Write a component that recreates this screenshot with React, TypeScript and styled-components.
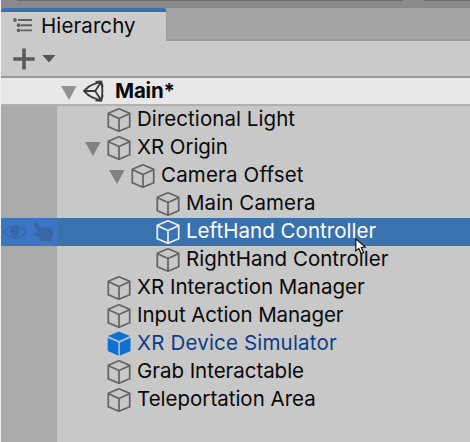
import React from 'react';
import styled, { createGlobalStyle } from 'styled-components';

const Global = createGlobalStyle`
  * { box-sizing: border-box; }
  body { margin: 0; background: #c8c8c8; overflow: hidden; }
`;

const Window = styled.main`
  position: relative;
  width: 470px;
  height: 442px;
  border-left: 1px solid #f2f2f2;
  background: #c8c8c8;
  font-family: Inter, sans-serif;
  color: #090909;
  overflow: hidden;
  display: flex;
  flex-direction: column;
`;

const TopEdge = styled.div`
  height: 8px;
  flex: none;
  background: #8a8a8a;
  padding-left: 16px;
  display: flex;
  gap: 21px;
`;

const EdgeLine = styled.span<{ $width: number }>`
  width: ${p => p.$width}px;
  height: 1px;
  flex: none;
  background: #6b6b6b;
`;

const TabBar = styled.div`
  display: flex;
  flex: none;
  height: 33px;
  background: #a5a5a5;
`;

const Tab = styled.div`
  width: 165px;
  border-top: 4px solid #3a72b0;
  border-radius: 2px 2px 0 0;
  background: #cbcbcb;
  display: flex;
  align-items: flex-start;
  padding-left: 12px;
`;

const TabSpace = styled.div`
  flex: 1;
  border-left: 1px solid #999;
  border-bottom: 2px solid #999;
`;

const Toolbar = styled.div`
  height: 37px;
  flex: none;
  background: #cbcbcb;
  border-bottom: 2px solid #999;
  display: flex;
  align-items: center;
  gap: 7px;
  padding-left: 12px;
`;

const Label = styled.span<{ $spacing?: number; $bold?: boolean; $tone?: string }>`
  font-size: 20.5px;
  font-weight: ${p => (p.$bold ? 700 : 400)};
  color: ${p => p.$tone ?? '#090909'};
  line-height: 26px;
  white-space: nowrap;
  letter-spacing: ${p => p.$spacing ?? 0}px;
`;

const TabLabel = styled(Label)`
  line-height: 28px;
`;

const SceneRow = styled.div`
  height: 28px;
  flex: none;
  background: #e8e8e8;
  border-bottom: 2px solid #b0b0b0;
  padding-left: 60px;
  display: flex;
  align-items: flex-start;
`;

const Tree = styled.div`
  flex: 1;
`;

const Row = styled.div<{ $selected?: boolean }>`
  display: flex;
  height: 28px;
  background: ${p => (p.$selected ? '#3a72b0' : 'transparent')};
`;

const Gutter = styled.div<{ $selected?: boolean }>`
  width: 56px;
  flex: none;
  background: ${p => (p.$selected ? '#3e75c3' : '#aaaaaa')};
`;

const Entry = styled.div<{ $indent: number }>`
  display: flex;
  align-items: flex-start;
  padding-left: ${p => p.$indent}px;
`;

const ArrowSlot = styled.span`
  width: 22px;
  height: 28px;
  flex: none;
  display: flex;
  align-items: center;
`;

const SceneArrowSlot = styled(ArrowSlot)`
  width: 21px;
`;

const CubeSlot = styled.span`
  width: 30px;
  height: 28px;
  flex: none;
`;

const SceneIconSlot = styled.span`
  width: 33px;
  height: 26px;
  flex: none;
`;

const ListSlot = styled.span`
  width: 28px;
  height: 28px;
  flex: none;
`;

const Pointer = styled.svg`
  position: absolute;
  left: 352px;
  top: 236px;
`;

const Arrow = ({ scene = false }: { scene?: boolean }) => (
  <svg width="16" height="16" viewBox="0 0 16 16">
    <path d="M0 2H15.5L8 16Z" fill={scene ? '#929292' : '#808080'} />
  </svg>
);

type CubeKind = 'plain' | 'selected' | 'prefab';

const Cube = ({ kind }: { kind: CubeKind }) => {
  if (kind === 'prefab') {
    return (
      <svg width="25" height="28" viewBox="0 0 25 28">
        <path d="M12 1.6L23 6L12 11L1 6Z M0.7 7.7L11.4 12.5V25.7L0.7 21Z M23.5 7.7L12.8 12.5V25.7L23.5 21Z" fill="#1170d4" />
      </svg>
    );
  }
  return (
    <svg width="25" height="28" viewBox="0 0 25 28">
      <path
        d="M12 2.8L22.7 7.2V20.7L12 25.2L1.3 20.7V7.2Z M1.6 7.7L12 12.6L22.4 7.7 M12 12.6V25"
        fill="none"
        stroke={kind === 'selected' ? '#f0f0f0' : '#626262'}
        strokeWidth="1.7"
        strokeLinejoin="round"
      />
    </svg>
  );
};

const SceneIcon = () => (
  <svg width="24" height="26" viewBox="0 0 24 26">
    <path
      d="M7.2 8.3L2 13L7.2 17.9 M5.6 9.6Q9.5 6.3 19.2 3.8 M5.6 16.4Q9.5 19.9 19.2 22.4 M19.2 3.8Q21.6 13 19.2 22.4 M2 13H13.2L19 4.2 M13.2 13L19 22 M13.5 4L19.2 3.5L20.8 9 M13.5 22.2L19.2 22.7L20.8 17"
      fill="none"
      stroke="#3b3b3b"
      strokeWidth="1.9"
      strokeLinejoin="round"
    />
  </svg>
);

const ListIcon = () => (
  <svg width="20" height="28" viewBox="0 0 20 28">
    <g fill="#606060">
      <circle cx="2" cy="8" r="1.9" />
      <circle cx="5.7" cy="13.2" r="1.9" />
      <circle cx="5.7" cy="18.3" r="1.9" />
      <path d="M5 7.1H19V9H5Z M8 12.3H19V14.2H8Z M8 17.4H19V19.3H8Z" />
    </g>
  </svg>
);

const Visibility = () => (
  <svg width="56" height="28" viewBox="0 0 56 28">
    <path d="M2.7 14Q14 2.5 25.3 14Q14 25.5 2.7 14Z" fill="none" stroke="#3867a9" strokeWidth="1.5" />
    <circle cx="14" cy="13.7" r="4.8" fill="#3867a9" />
    <path d="M33 6Q35 3.3 37.2 6L41 10.3Q42.7 8.5 44 10Q45.7 8.3 47 10.2Q49 9 50 11.3Q52 10.5 52 13V18Q52 20 49.8 21.5V23H39.5V21L34.2 16.8Q32.5 14.8 35 14.2L38 15L33.2 7.8Z" fill="#3867a9" />
  </svg>
);

interface Item {
  name: string;
  level: number;
  spacing: number;
  open?: boolean;
  kind?: CubeKind;
}

const items: Item[] = [
  { name: 'Directional Light', level: 0, spacing: 0.06 },
  { name: 'XR Origin', level: 0, spacing: -0.05, open: true },
  { name: 'Camera Offset', level: 1, spacing: 0.17, open: true },
  { name: 'Main Camera', level: 2, spacing: 0.1 },
  { name: 'LeftHand Controller', level: 2, spacing: 0.03, kind: 'selected' },
  { name: 'RightHand Controller', level: 2, spacing: 0.02 },
  { name: 'XR Interaction Manager', level: 0, spacing: 0 },
  { name: 'Input Action Manager', level: 0, spacing: -0.1 },
  { name: 'XR Device Simulator', level: 0, spacing: 0.18, kind: 'prefab' },
  { name: 'Grab Interactable', level: 0, spacing: -0.04 },
  { name: 'Teleportation Area', level: 0, spacing: 0 },
];

const tones: Record<CubeKind, string> = {
  plain: '#090909',
  selected: '#ffffff',
  prefab: '#0b3d86',
};

const indents = [28, 52, 77];

export default function App() {
  return (
    <Window>
      <Global />
      <TopEdge>
        <EdgeLine $width={386} />
        <EdgeLine $width={50} />
      </TopEdge>
      <TabBar>
        <Tab>
          <ListSlot><ListIcon /></ListSlot>
          <TabLabel $spacing={0.1}>Hierarchy</TabLabel>
        </Tab>
        <TabSpace />
      </TabBar>
      <Toolbar>
        <svg width="22" height="22" viewBox="0 0 22 22">
          <path d="M11 0.5V21.5M0.3 11H21.7" stroke="#5b5b5b" strokeWidth="3.6" />
        </svg>
        <svg width="14" height="9" viewBox="0 0 14 9">
          <path d="M0.3 1H13.5L7 8.5Z" fill="#595954" />
        </svg>
      </Toolbar>
      <SceneRow>
        <SceneArrowSlot><Arrow scene /></SceneArrowSlot>
        <SceneIconSlot><SceneIcon /></SceneIconSlot>
        <Label $spacing={-0.2} $bold>Main*</Label>
      </SceneRow>
      <Tree>
        {items.map(item => {
          const kind = item.kind ?? 'plain';
          const selected = kind === 'selected';
          return (
            <Row key={item.name} $selected={selected}>
              <Gutter $selected={selected}>{selected && <Visibility />}</Gutter>
              <Entry $indent={indents[item.level]}>
                <ArrowSlot>{item.open && <Arrow />}</ArrowSlot>
                <CubeSlot><Cube kind={kind} /></CubeSlot>
                <Label $spacing={item.spacing} $tone={tones[kind]}>{item.name}</Label>
              </Entry>
            </Row>
          );
        })}
        <Row><Gutter /></Row>
      </Tree>
      <Pointer width="14" height="20" viewBox="0 0 14 20">
        <path d="M2.8 2.8V15L5.8 12.4L8.2 17.6L10.6 16.5L8.3 11.5L12.2 11.1Z" fill="#fff" stroke="#111" strokeWidth="1.2" />
      </Pointer>
    </Window>
  );
}
